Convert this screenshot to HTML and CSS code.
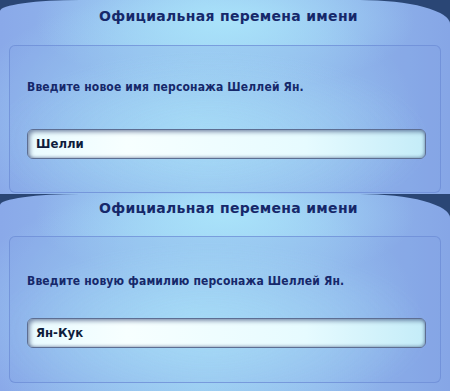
FILE: index.html
```html
<!DOCTYPE html>
<html lang="ru">
<head>
<meta charset="utf-8">
<title>Официальная перемена имени</title>
<link rel="stylesheet" href="styles.css">
</head>
<body>
<div class="screen">
  <section class="panel panel-first">
    <h1 class="panel-title">Официальная перемена имени</h1>
    <div class="panel-box">
      <p class="prompt">Введите новое имя персонажа Шеллей Ян.</p>
      <div class="field">Шелли</div>
    </div>
  </section>
  <section class="panel panel-second">
    <h1 class="panel-title">Официальная перемена имени</h1>
    <div class="panel-box">
      <p class="prompt">Введите новую фамилию персонажа Шеллей Ян.</p>
      <div class="field">Ян-Кук</div>
    </div>
  </section>
</div>
</body>
</html>
```
FILE: styles.css
```css
html, body {
  margin: 0;
  padding: 0;
  background: #2a4675;
}
.screen {
  width: 450px;
  height: 391px;
  display: flex;
  flex-direction: column;
  overflow: hidden;
  font-family: "DejaVu Sans", "Liberation Sans", sans-serif;
  color: #16286a;
}
.panel {
  box-sizing: border-box;
  padding: 0 9px;
  border-radius: 80px 90px 0 0 / 11px 24px 0 0;
  background:
    radial-gradient(ellipse 190px 70px at 225px 22px, rgba(170, 228, 250, 0.95), rgba(170, 228, 250, 0) 100%),
    radial-gradient(ellipse 230px 130px at 190px 120px, rgba(168, 225, 248, 0.9), rgba(168, 225, 248, 0) 100%),
    linear-gradient(90deg, #8aa9e9 0%, #97c4ef 45%, #93baed 70%, #86a6e6 100%);
}
.panel-first {
  height: 194px;
}
.panel-second {
  height: 197px;
}
.panel-title {
  margin: 0;
  box-sizing: border-box;
  height: 45px;
  padding: 7px 0 0 7px;
  font-size: 14px;
  font-weight: bold;
  line-height: 18px;
  letter-spacing: 0.3px;
  text-align: center;
}
.panel-second .panel-title {
  height: 42px;
  padding-top: 5px;
}
.panel-box {
  box-sizing: border-box;
  height: 148px;
  padding: 33px 14px 0 17px;
  border: 1px solid rgba(108, 140, 214, 0.75);
  border-radius: 6px;
  background:
    radial-gradient(ellipse 220px 90px at 200px 95px, rgba(175, 230, 250, 0.55), rgba(175, 230, 250, 0) 100%),
    rgba(128, 160, 228, 0.25);
}
.panel-second .panel-box {
  height: 147px;
  padding-top: 36px;
}
.prompt {
  margin: 0;
  font-family: "DejaVu Sans Condensed", "DejaVu Sans", sans-serif;
  font-size: 12px;
  font-weight: bold;
  line-height: 16px;
  letter-spacing: 0.15px;
}
.field {
  box-sizing: border-box;
  margin-top: 34px;
  height: 30px;
  padding: 0 0 0 8px;
  border: 1px solid #5d6e92;
  border-radius: 6px;
  background: linear-gradient(90deg, #e9fbff 0%, #f7ffff 25%, #e6fbff 70%, #c4ecf8 100%);
  box-shadow: inset 2px 2px 4px rgba(40, 60, 110, 0.55), inset -1px -1px 3px rgba(40, 60, 110, 0.35);
  font-family: "DejaVu Sans Condensed", "DejaVu Sans", sans-serif;
  font-size: 13px;
  font-weight: bold;
  line-height: 28px;
  color: #0f1c3c;
}
.panel-second .field {
  margin-top: 29px;
}
```
